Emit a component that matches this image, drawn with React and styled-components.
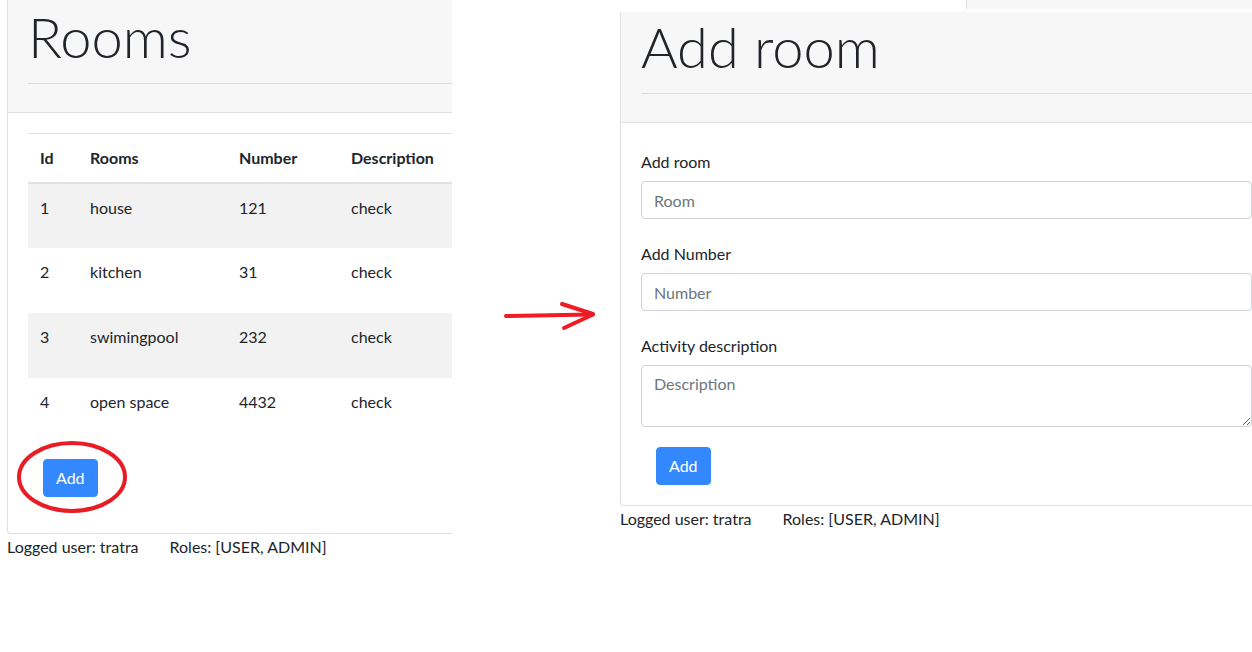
import React from "react";
import styled, { createGlobalStyle } from "styled-components";

const Global = createGlobalStyle`
  html, body { margin: 0; padding: 0; background: #fff; }
  body {
    font-family: "Lato", "Open Sans", "Liberation Sans", sans-serif;
    font-size: 16px;
    line-height: 24px;
    color: #212529;
  }
  * { box-sizing: border-box; }
`;

const Page = styled.div`
  display: flex;
  align-items: flex-start;
  width: 1252px;
  height: 652px;
  overflow: hidden;
`;

const Shot = styled.div`
  position: relative;
  flex: ${(p) => (p.$grow ? "1 1 auto" : "0 0 auto")};
  width: ${(p) => (p.$width ? `${p.$width}px` : "auto")};
  padding-left: ${(p) => p.$padLeft || 0}px;
  overflow: hidden;
  min-width: 0;
`;

const TopStrip = styled.div`
  margin-left: 346px;
  height: 9px;
  margin-bottom: 3px;
  background: #f7f7f7;
  border-left: 1px solid #dcdcdc;
`;

const Card = styled.div`
  width: ${(p) => p.$width}px;
  border: 1px solid #dfdfdf;
  border-top: none;
  border-radius: 0 0 4px 4px;
  background: #fff;
`;

const Jumbo = styled.div`
  background: #f7f7f7;
  padding: ${(p) => p.$padTop}px 20px 28px 20px;
  border-bottom: 1px solid #dfdfdf;
`;

const Heading = styled.h1`
  margin: 0;
  font-family: "Lato", "Open Sans", sans-serif;
  font-weight: 300;
  font-size: 56px;
  line-height: 1.2;
  color: #212529;
`;

const Rule = styled.hr`
  margin: 13px 0 0 0;
  border: 0;
  border-top: 1px solid #dcdcdc;
`;

const Body = styled.div`
  padding: ${(p) => p.$padTop}px 20px ${(p) => p.$padBottom}px 20px;
`;

const Table = styled.table`
  width: 100%;
  border-collapse: collapse;
  border-top: 1px solid #dee2e6;
`;

const Th = styled.th`
  text-align: left;
  font-weight: 700;
  padding: 12px;
  width: ${(p) => (p.$w ? `${p.$w}px` : "auto")};
  border-bottom: 2px solid #dee2e6;
  white-space: nowrap;
`;

const Tr = styled.tr`
  background: ${(p) => (p.$striped ? "#f2f2f2" : "#fff")};
  & + & td { border-top: 1px solid #dee2e6; }
`;

const Td = styled.td`
  padding: 12px;
  height: 65px;
  vertical-align: top;
  white-space: nowrap;
`;

const Button = styled.button`
  display: inline-block;
  margin: ${(p) => p.$mt}px 0 0 15px;
  padding: 6px 12px;
  border: 1px solid #3388ff;
  border-radius: 4px;
  background: #3388ff;
  color: #fff;
  font-family: inherit;
  font-size: 16px;
  line-height: 24px;
  cursor: pointer;
`;

const Footer = styled.div`
  display: flex;
  gap: 31px;
  white-space: nowrap;
  line-height: 24px;
  margin-top: 1px;
`;

const Label = styled.label`
  display: block;
  margin-bottom: 7px;
`;

const Group = styled.div`
  margin-bottom: 23px;
`;

const Input = styled.input`
  display: block;
  width: 100%;
  height: 38px;
  padding: 6px 12px;
  border: 1px solid #ced4da;
  border-radius: 4px;
  font-family: inherit;
  font-size: 16px;
  color: #495057;
  &::placeholder { color: #6c757d; }
`;

const TextArea = styled.textarea`
  display: block;
  width: 100%;
  height: 62px;
  padding: 6px 12px;
  border: 1px solid #ced4da;
  border-radius: 4px;
  font-family: inherit;
  font-size: 16px;
  line-height: 24px;
  resize: vertical;
  &::placeholder { color: #6c757d; }
`;

const ArrowCol = styled.div`
  flex: 0 0 168px;
  padding-top: 296px;
`;

const Circle = styled.svg`
  position: absolute;
  left: 16px;
  top: 440px;
  pointer-events: none;
`;

const rooms = [
  { id: 1, name: "house", number: 121, desc: "check" },
  { id: 2, name: "kitchen", number: 31, desc: "check" },
  { id: 3, name: "swimingpool", number: 232, desc: "check" },
  { id: 4, name: "open space", number: 4432, desc: "check" },
];

const UserFooter = () => (
  <Footer>
    <span>Logged user: tratra</span>
    <span>Roles: [USER, ADMIN]</span>
  </Footer>
);

export default function App() {
  return (
    <>
      <Global />
      <Page>
        <Shot $width={452} $padLeft={7}>
          <Card $width={640}>
            <Jumbo $padTop={3}>
              <Heading>Rooms</Heading>
              <Rule />
            </Jumbo>
            <Body $padTop={20} $padBottom={36}>
              <Table>
                <thead>
                  <tr>
                    <Th $w={50}>Id</Th>
                    <Th $w={149}>Rooms</Th>
                    <Th $w={112}>Number</Th>
                    <Th>Description</Th>
                  </tr>
                </thead>
                <tbody>
                  {rooms.map((r, i) => (
                    <Tr key={r.id} $striped={i % 2 === 0}>
                      <Td>{r.id}</Td>
                      <Td>{r.name}</Td>
                      <Td>{r.number}</Td>
                      <Td>{r.desc}</Td>
                    </Tr>
                  ))}
                </tbody>
              </Table>
              <Button $mt={16}>Add</Button>
            </Body>
          </Card>
          <UserFooter />
          <Circle width="112" height="74" viewBox="0 0 112 74">
            <ellipse cx="56" cy="37" rx="53" ry="34" fill="none" stroke="#e81c24" strokeWidth="4" />
          </Circle>
        </Shot>

        <ArrowCol>
          <svg width="168" height="40" viewBox="0 0 168 40">
            <g stroke="#ee1c25" strokeWidth="4" strokeLinecap="round" fill="none">
              <line x1="54" y1="20" x2="140" y2="18.5" />
              <line x1="110" y1="8" x2="141" y2="18" />
              <line x1="112" y1="32" x2="141" y2="18.5" />
            </g>
          </svg>
        </ArrowCol>

        <Shot $grow>
          <TopStrip />
          <Card $width={653}>
            <Jumbo $padTop={1}>
              <Heading>Add room</Heading>
              <Rule />
            </Jumbo>
            <Body $padTop={27} $padBottom={20}>
              <Group>
                <Label>Add room</Label>
                <Input placeholder="Room" />
              </Group>
              <Group>
                <Label>Add Number</Label>
                <Input placeholder="Number" />
              </Group>
              <div>
                <Label>Activity description</Label>
                <TextArea placeholder="Description" />
              </div>
              <Button $mt={20}>Add</Button>
            </Body>
          </Card>
          <UserFooter />
        </Shot>
      </Page>
    </>
  );
}
